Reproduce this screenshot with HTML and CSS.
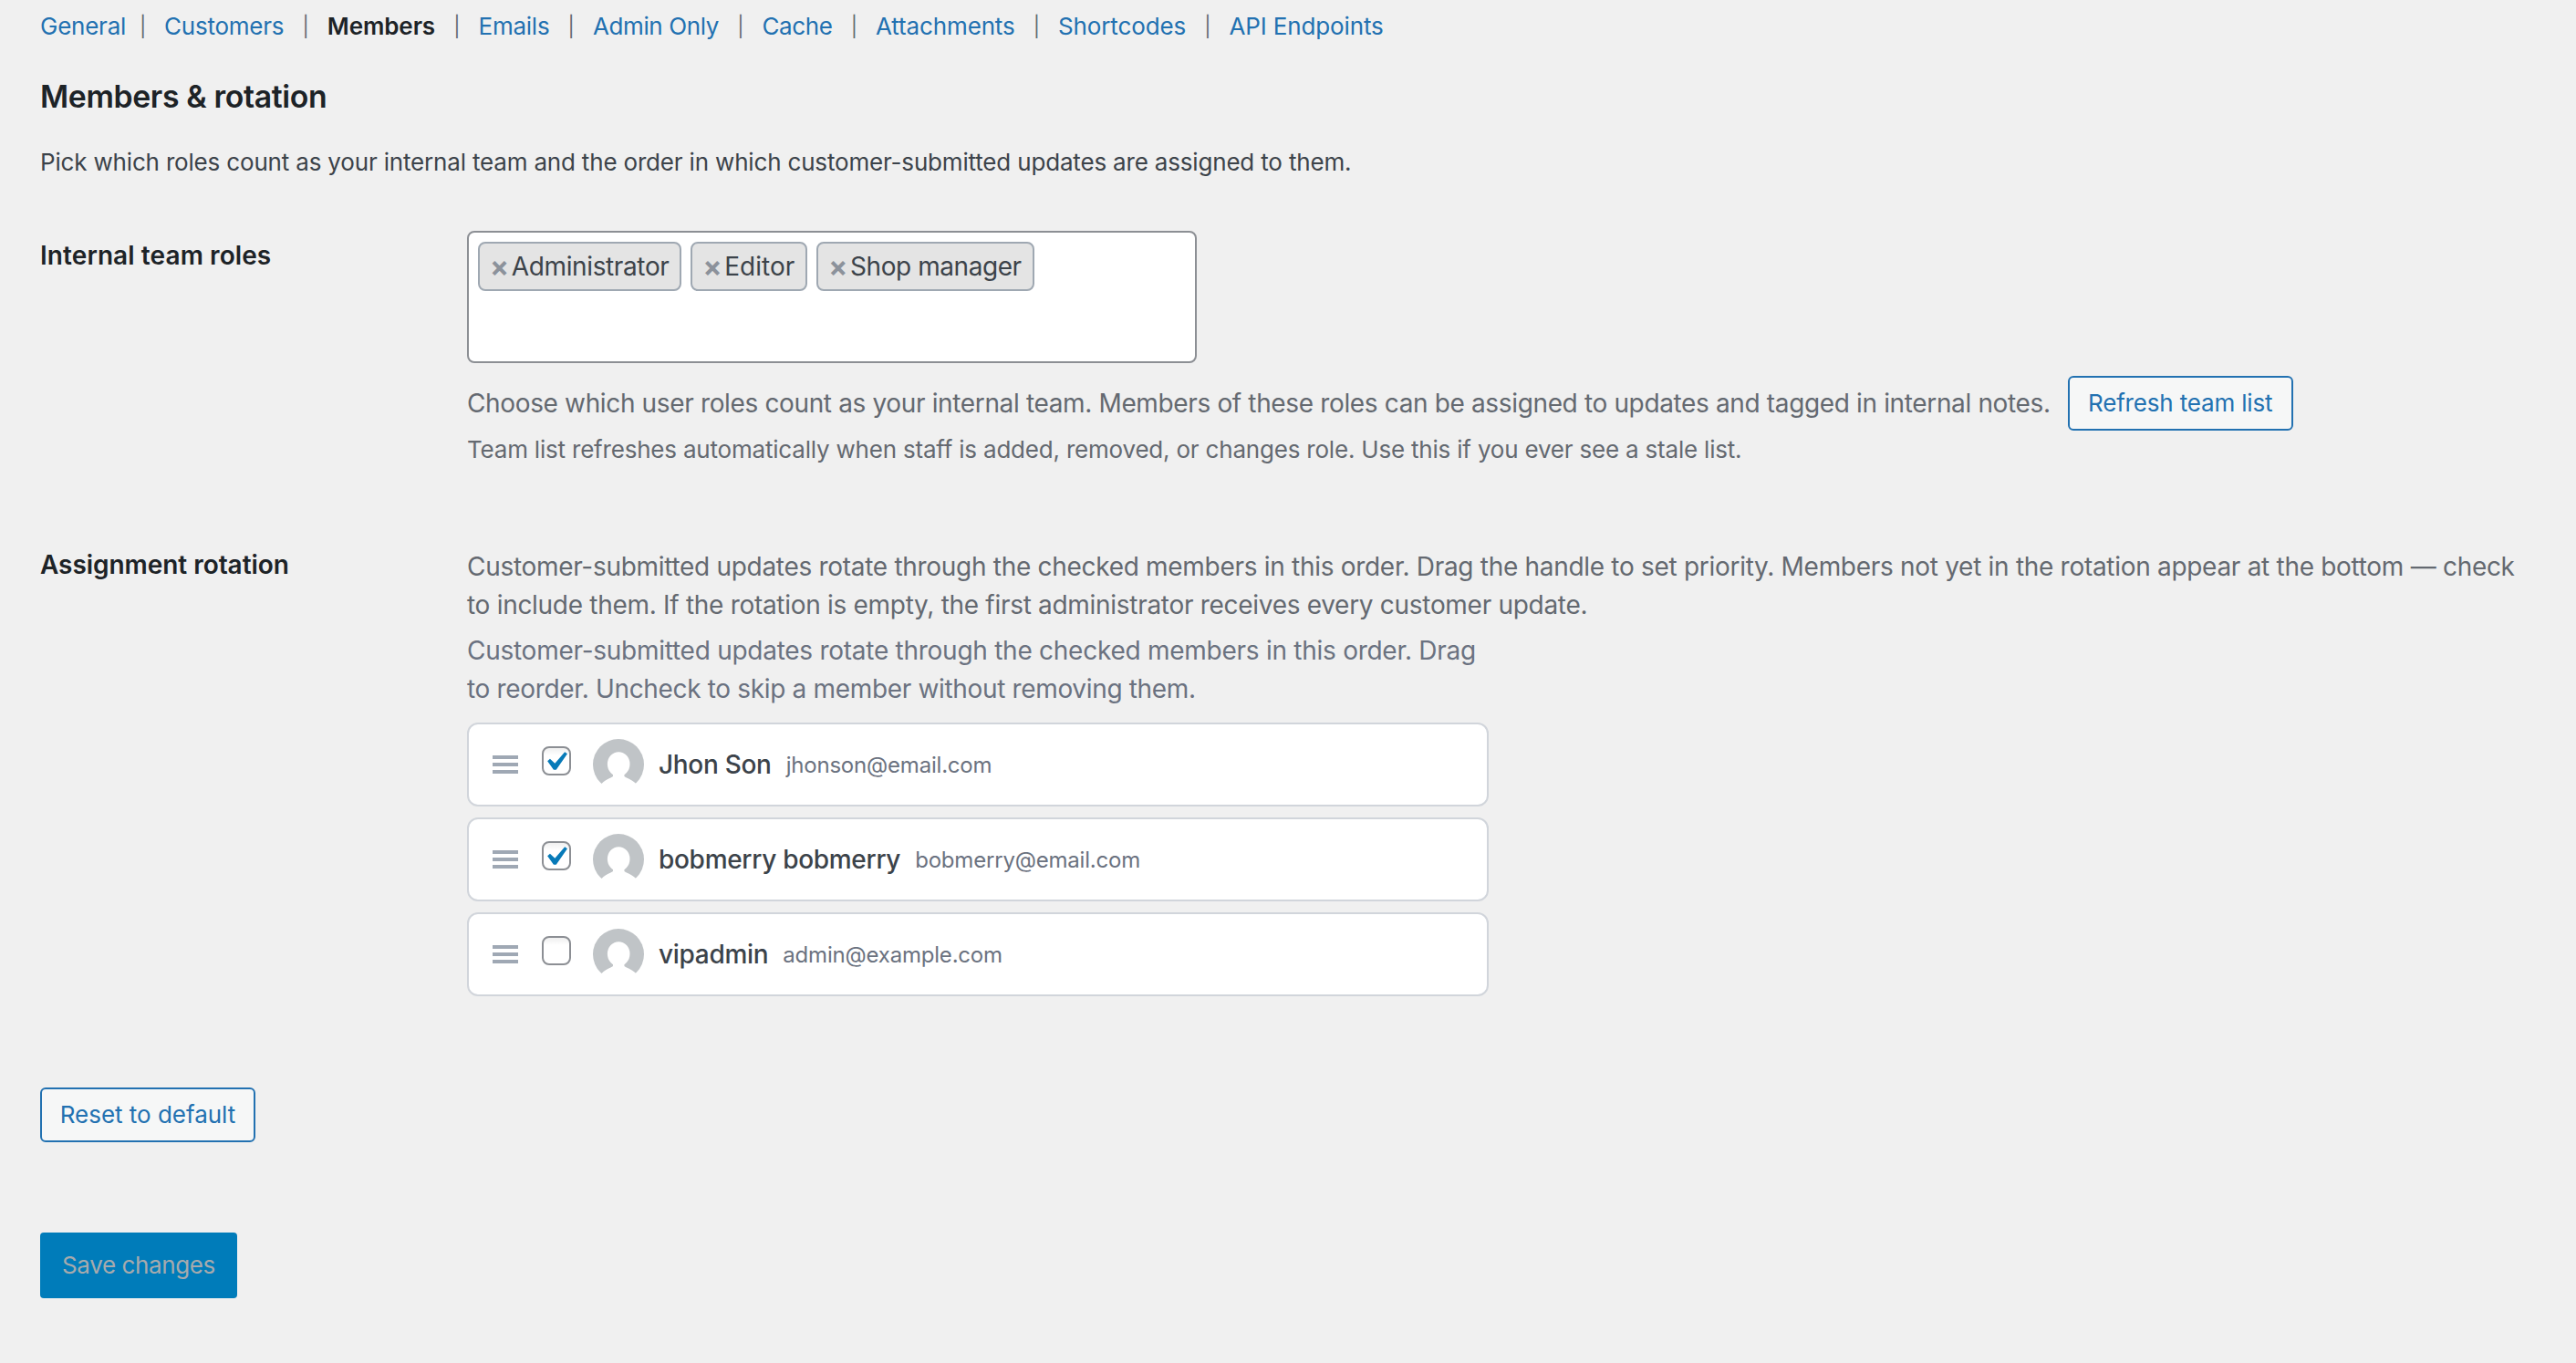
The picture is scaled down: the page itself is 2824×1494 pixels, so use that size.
FILE: index.html
```html
<!DOCTYPE html>
<html lang="en">
<head>
<meta charset="utf-8">
<title>Members &amp; rotation</title>
<link rel="stylesheet" href="styles.css">
</head>
<body>
<svg class="sprite" aria-hidden="true">
  <symbol id="avatar" viewBox="0 0 56 56">
    <circle cx="28" cy="28" r="28" fill="#c0c4c7"/>
    <ellipse cx="28.2" cy="27.5" rx="12.3" ry="13.3" fill="#fff"/>
    <path d="M22 36h12.4v4.5c0 2 7 2.5 12.8 8.5L50 57H6l3.5-8c5.5-6 12.500-6.500 12.500-8.500z" fill="#fff"/>
  </symbol>
  <symbol id="check" viewBox="0 0 20 20">
    <path d="M14.830 4.890l1.340.940-5.810 8.380H9.020L5.780 9.670l1.340-1.250 2.570 2.400z" fill="#077ab8"/>
  </symbol>
</svg>
<main class="page">
  <nav class="tabs">
    <a href="#">General</a><span class="sep sep-first">|</span>
    <a href="#">Customers</a><span class="sep">|</span>
    <a href="#" class="current">Members</a><span class="sep">|</span>
    <a href="#">Emails</a><span class="sep">|</span>
    <a href="#" class="tight">Admin Only</a><span class="sep">|</span>
    <a href="#" class="tight">Cache</a><span class="sep">|</span>
    <a href="#" class="loose">Attachments</a><span class="sep">|</span>
    <a href="#" class="loose">Shortcodes</a><span class="sep">|</span>
    <a href="#" class="loose">API Endpoints</a>
  </nav>
  <h2 class="title">Members &amp; rotation</h2>
  <p class="intro">Pick which roles count as your internal team and the order in which customer-submitted updates are assigned to them.</p>

  <section class="row row-roles">
    <h3 class="label">Internal team roles</h3>
    <div class="field">
      <div class="select">
        <span class="tag"><b class="x">×</b><span class="t-admin">Administrator</span></span>
        <span class="tag"><b class="x">×</b><span class="t-editor">Editor</span></span>
        <span class="tag"><b class="x">×</b><span class="t-shop">Shop manager</span></span>
      </div>
      <div class="refresh">
        <span class="choose">Choose which user roles count as your internal team. Members of these roles can be assigned to updates and tagged in internal notes.</span>
        <button class="button button-refresh">Refresh team list</button>
      </div>
      <p class="hint">Team list refreshes automatically when staff is added, removed, or changes role. Use this if you ever see a stale list.</p>
    </div>
  </section>

  <section class="row row-rotation">
    <h3 class="label label-rotation">Assignment rotation</h3>
    <div class="field">
      <p class="desc"><span class="desc-first">Customer-submitted updates rotate through the checked members in this order. Drag the handle to set priority. Members not yet in the rotation appear at the bottom — check</span><br><span class="desc-second">to include them. If the rotation is empty, the first administrator receives every customer update.</span></p>
      <p class="desc desc-muted"><span class="muted-first">Customer-submitted updates rotate through the checked members in this order. Drag</span><br><span class="muted-second">to reorder. Uncheck to skip a member without removing them.</span></p>
      <ul class="members">
        <li class="member">
          <span class="handle"><i></i><i></i><i></i></span>
          <span class="box"><svg class="tick"><use href="#check"/></svg></span>
          <svg class="avatar"><use href="#avatar"/></svg>
          <span class="name">Jhon Son</span><span class="email">jhonson@email.com</span>
        </li>
        <li class="member">
          <span class="handle"><i></i><i></i><i></i></span>
          <span class="box"><svg class="tick"><use href="#check"/></svg></span>
          <svg class="avatar"><use href="#avatar"/></svg>
          <span class="name">bobmerry bobmerry</span><span class="email">bobmerry@email.com</span>
        </li>
        <li class="member">
          <span class="handle"><i></i><i></i><i></i></span>
          <span class="box"></span>
          <svg class="avatar"><use href="#avatar"/></svg>
          <span class="name">vipadmin</span><span class="email">admin@example.com</span>
        </li>
      </ul>
    </div>
  </section>

  <button class="button button-reset">Reset to default</button>
  <button class="button-save">Save changes</button>
</main>
</body>
</html>
```
FILE: styles.css
```css
* { box-sizing: border-box; margin: 0; padding: 0; }

body {
  background: #f0f0f0;
  color: #3c434a;
  font-family: Inter, "Liberation Sans", sans-serif;
  font-size: 26px;
}

.sprite { display: none; }

.page {
  display: flex;
  flex-direction: column;
  align-items: flex-start;
  padding: 9px 44px 0;
}

.tabs { display: flex; line-height: 39px; letter-spacing: -0.24px; }
.tabs a { color: #2271b1; text-decoration: none; white-space: nowrap; }
.tabs .current { color: #1d2327; font-weight: 600; letter-spacing: -0.11px; }
.tabs .tight { letter-spacing: -0.38px; }
.tabs .loose { letter-spacing: -0.14px; }
.sep { width: 47.5px; padding-top: 1px; text-align: center; font-size: 22px; color: #646970; }
.sep-first { width: 42px; padding-right: 5px; }

.title {
  margin-top: 38px;
  font-size: 33.8px;
  font-weight: 600;
  line-height: 40px;
  letter-spacing: -0.36px;
  color: #1d2327;
}
.tabs { height: 39px; }
.intro { margin-top: 32px; line-height: 40px; letter-spacing: -0.175px; }

.row { display: grid; grid-template-columns: 468px 1fr; width: 100%; }
.row-roles { margin-top: 55px; }
.row-rotation { margin-top: 87px; }

.label {
  padding-top: 9px;
  font-size: 28px;
  font-weight: 600;
  line-height: 37px;
  letter-spacing: 0.09px;
  color: #1d2327;
}
.label-rotation { padding-top: 1px; letter-spacing: -0.05px; }

.select {
  display: flex;
  align-items: flex-start;
  gap: 10px;
  width: 800px;
  height: 145px;
  padding: 10px;
  border: 2px solid #8c8f94;
  border-radius: 8px;
  background: #fff;
}
.tag {
  display: flex;
  height: 54px;
  padding: 0 12px 0 11px;
  border: 2px solid #9fa8b2;
  border-radius: 8px;
  background: #e4e4e4;
  font-size: 28px;
  line-height: 50px;
}
.x { width: 23.8px; color: #8c929b; font-size: 31px; font-weight: 700; }
.t-admin { letter-spacing: -0.373px; }
.t-editor { letter-spacing: 0; }
.t-shop { letter-spacing: -0.44px; }

.refresh { display: flex; align-items: center; margin-top: 14px; color: #646970; }
.choose { font-size: 28px; letter-spacing: -0.356px; white-space: nowrap; }

.button {
  height: 60px;
  border: 2px solid #2271b1;
  border-radius: 6px;
  background: #f6f7f7;
  color: #2271b1;
  font: 26px/56px Inter, "Liberation Sans", sans-serif;
}
.button-refresh { width: 247px; margin-left: 19px; letter-spacing: -0.17px; }
.button-reset { width: 236px; margin-top: 100px; letter-spacing: -0.02px; }
.button-save {
  width: 216px;
  height: 72px;
  margin-top: 99px;
  border: 0;
  border-radius: 4px;
  background: #007cba;
  color: #a7aaad;
  font: 26px/72px Inter, "Liberation Sans", sans-serif;
  letter-spacing: -0.388px;
}

.hint { margin-top: 1px; line-height: 40px; letter-spacing: -0.2px; color: #646970; }

.desc { font-size: 28px; line-height: 42px; white-space: nowrap; color: #646970; }
.desc-first { letter-spacing: -0.297px; }
.desc-second { letter-spacing: -0.296px; }
.desc-muted { margin-top: 8px; color: #6b7280; }
.muted-first { letter-spacing: -0.263px; }
.muted-second { letter-spacing: -0.336px; }

.members { display: grid; gap: 12px; width: 1120px; margin-top: 16px; list-style: none; }
.member {
  display: flex;
  align-items: center;
  height: 92px;
  padding-left: 26px;
  border: 2px solid #d1d5db;
  border-radius: 12px;
  background: #fff;
}
.handle { display: grid; gap: 4px; width: 28px; }
.handle i { height: 4px; background: #9fa8b4; }
.box {
  width: 32px;
  height: 32px;
  margin: 0 24px 8px 26px;
  border: 2px solid #8c8f94;
  border-radius: 8px;
  background: linear-gradient(#f0f0f0, #fff 8px);
}
.tick { display: block; width: 42px; height: 42px; margin: -6px 0 0 -8px; }
.avatar { width: 56px; height: 56px; margin-right: 16px; }
.name { font-size: 28px; font-weight: 500; letter-spacing: -0.3px; }
.email { margin-left: 16px; font-size: 24px; letter-spacing: -0.2px; color: #6b7280; }
```
